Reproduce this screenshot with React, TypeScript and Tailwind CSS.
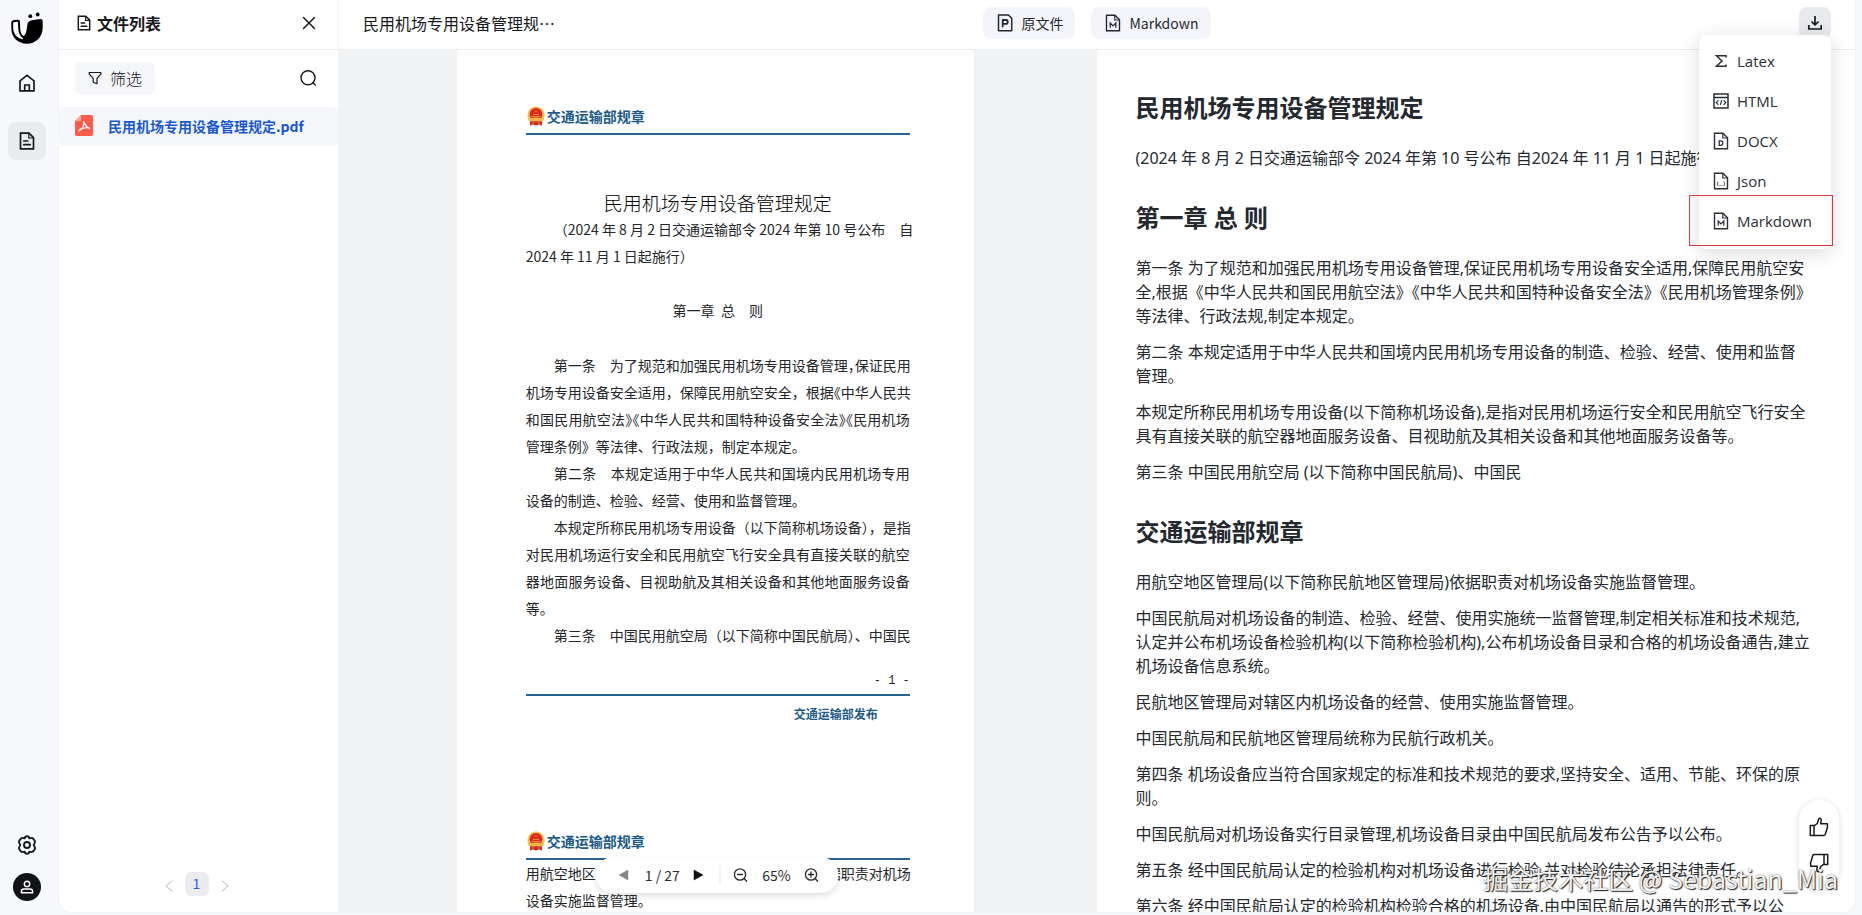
import React from "react";

const stroke = {
  fill: "none",
  stroke: "currentColor",
  strokeLinejoin: "round" as const,
  strokeLinecap: "round" as const,
};

function Logo() {
  return (
    <svg viewBox="0 0 32 32" className="size-8" aria-hidden="true">
      <circle cx="19.3" cy="4.2" r="1.9" fill="#000" />
      <circle cx="26.7" cy="2.5" r="1.9" fill="#000" />
      <path
        d="M16.5 11.5C17.5 9 20 8.3 24 7.8L29.5 7C31 6.900 31.700 7.800 31.700 10V16C31.500 25 25 31.700 16 31.700C7 31.700 0.300 25.500 0.300 16V11C0.300 8.800 1.500 8.300 3.500 8L6.500 7.700C8.300 7.600 8.900 8.500 9 10C9.200 16 9 22.500 12.500 24C15.500 22.500 15.800 17 16.500 11.500Z"
        fill="#000"
      />
      <path
        d="M2.200 11.200C2.200 10.200 3 10 4 9.900L5.800 9.700C6.800 9.700 7 10.200 7 11.500C7.200 17 7.200 22 11 25.400C12 26.200 12.500 26.500 12 27.300C6 26.500 2.200 21.500 2.200 16Z"
        fill="#fff"
      />
    </svg>
  );
}

function HomeIcon() {
  return (
    <svg viewBox="0 0 18 18" className="h-[18px] w-[18px]" strokeWidth="1.7" {...stroke} strokeLinejoin="miter">
      <path d="M2 6.800 9 1.300l7 5.500V16.800H2Z" />
      <path d="M6.700 16.500V11h4.600v5.500" />
    </svg>
  );
}

function DocIcon({ className, mark }: { className: string; mark?: React.ReactNode }) {
  return (
    <svg viewBox="0 0 16 18" className={className} strokeWidth={mark ? "1.4" : "1.7"} {...stroke} strokeLinejoin="miter">
      <path d="M1.500 1.200H10L14.500 5.700V16.800H1.500Z" />
      <path d="M9.800 1.500V6h4.500" strokeWidth="1.200" />
      {mark ?? <path d="M4.800 9h4M4.800 12.700h6.400" />}
    </svg>
  );
}

const markM = <path d="M5.200 13.300V9l2.800 2.900L10.800 9v4.300" strokeWidth="1.200" />;
const markD = <path d="M6.200 8.800h1.500c2.700 0 2.700 4.500 0 4.500H6.200Z" strokeWidth="1.300" />;
const markJson = (
  <path d="M5 10c-1 0-.2 1.800-1 1.800 .8 0 0 1.800 1 1.800M11 10c1 0 .2 1.800 1 1.800-.8 0 0 1.800-1 1.800M7 13.200v.1M9 13.200v.1" strokeWidth="1" />
);

function OriginalIcon() {
  return (
    <svg viewBox="0 0 16 18" className="h-[18px] w-4" strokeWidth="1.500" {...stroke}>
      <path d="M1.500 1h10L14.700 4.200V16.800H1.500Z" />
      <path d="M5.700 12.500V6h3.500c2 0 2 3.800 0 3.800H5.900" strokeWidth="1.800" />
    </svg>
  );
}

function FilterIcon() {
  return (
    <svg viewBox="0 0 14 14" className="size-[14px]" strokeWidth="1.200" {...stroke}>
      <path d="M1.200 1.500h11.600v1.700L9 7.400V12.800L5.200 11.200V7.400L1.200 3.200Z" />
    </svg>
  );
}

function SearchIcon() {
  return (
    <svg viewBox="0 0 18 18" className="h-[18px] w-[18px]" strokeWidth="1.400" {...stroke}>
      <circle cx="9" cy="8.800" r="7" />
      <path d="m14 13.800 2.300 2.300" />
    </svg>
  );
}

function CloseIcon() {
  return (
    <svg viewBox="0 0 14 14" className="size-[14px]" strokeWidth="1.500" {...stroke}>
      <path d="M1.500 1.500 12.500 12.500M12.500 1.500 1.500 12.500" />
    </svg>
  );
}

function PdfIcon() {
  return (
    <svg viewBox="0 0 18 21" className="h-[21px] w-[18px] shrink-0" aria-hidden="true">
      <path d="M6 0H16.200A1.800 1.800 0 0 1 18 1.800V19.200A1.800 1.800 0 0 1 16.200 21H1.800A1.800 1.800 0 0 1 0 19.200V6Z" fill="#ff5a4c" />
      <path d="M6 0V4.500Q6 6 4.500 6H0Z" fill="#ffa79f" />
      <path
        d="M8.600 6.200C9.800 9.500 10.800 11.800 14.600 13.700M3.800 15.900C6.800 14.800 8.900 11.500 8.800 6.400M4.600 14.600C7.500 12.900 10.500 12.400 14.300 13"
        stroke="#fff"
        strokeWidth="1.200"
        fill="none"
        strokeLinecap="round"
      />
    </svg>
  );
}

function GearIcon() {
  return (
    <svg viewBox="0 0 20 20" className="size-5" strokeWidth="1.900" {...stroke}>
      <path d="M7.700 3.300Q7.900 1.200 10 1.200T12.300 3.300Q14.800 2.300 16.300 3.700L18 6.300Q18.200 8 16.600 10Q18.200 12 18 13.700L16.300 16.300Q14.800 17.700 12.300 16.700Q12.100 18.800 10 18.800T7.700 16.700Q5.200 17.700 3.700 16.300L2 13.700Q1.800 12 3.400 10Q1.800 8 2 6.300L3.700 3.700Q5.200 2.300 7.700 3.300Z" />
      <circle cx="10" cy="10" r="3" />
    </svg>
  );
}

function UserIcon() {
  return (
    <svg viewBox="0 0 14 14" className="size-[14px]" strokeWidth="1.400" {...stroke}>
      <circle cx="7" cy="3.900" r="2.700" />
      <path d="M1.400 12.800V11.500C1.400 9.800 2.600 9 4 9h6c1.400 0 2.600.8 2.600 2.500v1.300Z" />
    </svg>
  );
}

function DownloadIcon() {
  return (
    <svg viewBox="0 0 16 16" className="size-4" strokeWidth="1.700" {...stroke} strokeLinecap="butt">
      <path d="M8 1v8.500M4.500 6.500 8 10l3.500-3.500M1.800 10v4h12.400v-4" />
    </svg>
  );
}

function SigmaIcon() {
  return (
    <svg viewBox="0 0 16 16" className="size-4" strokeWidth="1.500" {...stroke} strokeLinejoin="miter" strokeLinecap="butt">
      <path d="M13 4.500V2.700H3.500L9 8l-5.500 5.300H13v-1.800" />
    </svg>
  );
}

function HtmlIcon() {
  return (
    <svg viewBox="0 0 16 16" className="size-4" strokeWidth="1.500" {...stroke} strokeLinejoin="miter">
      <path d="M1 1h14v14H1ZM1 4.400h14" />
      <path d="m5 7.700-1.800 1.900L5 11.500m6-3.800 1.800 1.900L11 11.500M8.700 7.500l-1.300 4" strokeWidth="1.100" />
    </svg>
  );
}

function Emblem() {
  return (
    <svg viewBox="0 0 18 20" className="h-5 w-[18px]" aria-hidden="true">
      <path d="M9 0.500C14 0.500 17.500 4.500 17.500 9.500C17.500 13 16.500 15 15.500 15.500H2.500C1.500 15 0.500 13 0.500 9.500C0.500 4.500 4 0.500 9 0.500Z" fill="#f4c052" />
      <circle cx="9" cy="8.200" r="6.300" fill="#dc2a1e" />
      <path d="M4.200 10.500h9.600M6 8.500h6M9 4v2" stroke="#efa43e" strokeWidth="0.800" />
      <path d="M3 12.500Q9 10.500 15 12.500L14 15.500H4Z" fill="#f3b64a" />
      <path d="M3 15.300H15V19.500L12 18.500L9 19.500L6 18.500L3 19.500Z" fill="#cf2a1c" />
      <path d="M6 15.500v2.500M12 15.500v2.500" stroke="#f1a83f" strokeWidth="0.800" />
    </svg>
  );
}

function ZoomIcon({ plus }: { plus?: boolean }) {
  return (
    <svg viewBox="0 0 14 14" className="size-[14px]" strokeWidth="1.400" {...stroke}>
      <circle cx="6.500" cy="6.500" r="5.600" />
      <path d="M4 6.500h5M10.600 10.600l2.600 2.600" />
      {plus && <path d="M6.500 4v5" />}
    </svg>
  );
}

function ThumbIcon({ down }: { down?: boolean }) {
  return (
    <svg viewBox="0 0 20 20" className={down ? "size-5 rotate-180" : "size-5"} strokeWidth="1.500" {...stroke}>
      <path d="M1.300 8.500H5V18.500H1.300ZM5 8.800 8.300 6.500 9.800 1.800C10.500 .7 12.300 1.500 12.200 3L11.700 6.800H18.300L18.500 10 16.200 17.500Q15.800 18.500 14.800 18.500H5" />
    </svg>
  );
}

const regulationHeader = "交通运输部规章";

const pdfLines: { text: string; indent?: boolean; full?: boolean }[] = [
  { text: "第一条　为了规范和加强民用机场专用设备管理~，保证民用", indent: true, full: true },
  { text: "机场专用设备安全适用，保障民用航空安全，根据~《中华人民共", full: true },
  { text: "和国民用航空法~》《中华人民共和国特种设备安全法~》《民用机场", full: true },
  { text: "管理条例》等法律、行政法规，制定本规定。" },
  { text: "第二条　本规定适用于中华人民共和国境内民用机场专用", indent: true, full: true },
  { text: "设备的制造、检验、经营、使用和监督管理。" },
  { text: "本规定所称民用机场专用设备（以下简称机场设备），是指", indent: true, full: true },
  { text: "对民用机场运行安全和民用航空飞行安全具有直接关联的航空", full: true },
  { text: "器地面服务设备、目视助航及其相关设备和其他地面服务设备", full: true },
  { text: "等。" },
  { text: "第三条　中国民用航空局（以下简称中国民航局）、中国民", indent: true, full: true },
];

// A "~" marks a punctuation character that is set half-width.
function Typeset({ text }: { text: string }) {
  const parts = text.split("~");
  return (
    <>
      {parts.map((part, i) =>
        i === 0 ? (
          part
        ) : (
          <React.Fragment key={i}>
            <span className="[font-feature-settings:'halt']">{part.startsWith("》《") ? "》《" : part[0]}</span>
            {part.slice(part.startsWith("》《") ? 2 : 1)}
          </React.Fragment>
        ),
      )}
    </>
  );
}

function PageHeader() {
  return (
    <div className="flex h-[29px] items-center gap-0.5 border-b-2 border-[#2a6490] pb-2 pl-[1px] text-sm leading-5 font-bold text-[#1b5a8a]">
      <Emblem />
      <span>{regulationHeader}</span>
    </div>
  );
}

const body: { tag: "h2" | "p"; text: string }[] = [
  { tag: "h2", text: "民用机场专用设备管理规定" },
  { tag: "p", text: "(2024 年 8 月 2 日交通运输部令 2024 年第 10 号公布 自2024 年 11 月 1 日起施行)" },
  { tag: "h2", text: "第一章 总 则" },
  { tag: "p", text: "第一条 为了规范和加强民用机场专用设备管理,保证民用机场专用设备安全适用,保障民用航空安全,根据《中华人民共和国民用航空法》《中华人民共和国特种设备安全法》《民用机场管理条例》等法律、行政法规,制定本规定。" },
  { tag: "p", text: "第二条 本规定适用于中华人民共和国境内民用机场专用设备的制造、检验、经营、使用和监督管理。" },
  { tag: "p", text: "本规定所称民用机场专用设备(以下简称机场设备),是指对民用机场运行安全和民用航空飞行安全具有直接关联的航空器地面服务设备、目视助航及其相关设备和其他地面服务设备等。" },
  { tag: "p", text: "第三条 中国民用航空局 (以下简称中国民航局)、中国民" },
  { tag: "h2", text: "交通运输部规章" },
  { tag: "p", text: "用航空地区管理局(以下简称民航地区管理局)依据职责对机场设备实施监督管理。" },
  { tag: "p", text: "中国民航局对机场设备的制造、检验、经营、使用实施统一监督管理,制定相关标准和技术规范,认定并公布机场设备检验机构(以下简称检验机构),公布机场设备目录和合格的机场设备通告,建立机场设备信息系统。" },
  { tag: "p", text: "民航地区管理局对辖区内机场设备的经营、使用实施监督管理。" },
  { tag: "p", text: "中国民航局和民航地区管理局统称为民航行政机关。" },
  { tag: "p", text: "第四条 机场设备应当符合国家规定的标准和技术规范的要求,坚持安全、适用、节能、环保的原则。" },
  { tag: "p", text: "中国民航局对机场设备实行目录管理,机场设备目录由中国民航局发布公告予以公布。" },
  { tag: "p", text: "第五条 经中国民航局认定的检验机构对机场设备进行检验,并对检验结论承担法律责任。" },
  { tag: "p", text: "第六条 经中国民航局认定的检验机构检验合格的机场设备,由中国民航局以通告的形式予以公布。" },
];

const exportItems = [
  { label: "Latex", icon: <SigmaIcon /> },
  { label: "HTML", icon: <HtmlIcon /> },
  { label: "DOCX", icon: <DocIcon className="h-[18px] w-4" mark={markD} /> },
  { label: "Json", icon: <DocIcon className="h-[18px] w-4" mark={markJson} /> },
  { label: "Markdown", icon: <DocIcon className="h-[18px] w-4" mark={markM} /> },
];

export default function App() {
  return (
    <div className="relative flex h-screen overflow-hidden bg-[#f8f9fc] pr-[7px] pb-[3px] font-['Noto_Sans_CJK_SC',sans-serif] text-[#17191c]">
      <nav className="flex w-[59px] shrink-0 flex-col items-center pt-3 pr-[6px] pb-[11px]" aria-label="主导航">
        <Logo />
        <button aria-label="首页" className="mt-5 flex size-[38px] items-center justify-center rounded-lg">
          <HomeIcon />
        </button>
        <button aria-label="文件" className="mt-5 flex size-[38px] items-center justify-center rounded-lg bg-[#ebecf0]">
          <DocIcon className="h-[18px] w-4" />
        </button>
        <button aria-label="设置" className="mt-auto flex size-7 items-center justify-center">
          <GearIcon />
        </button>
        <button aria-label="账户" className="mt-[14px] flex size-7 items-center justify-center rounded-full bg-[#121316] text-white">
          <UserIcon />
        </button>
      </nav>

      <div className="flex min-w-0 flex-1 overflow-hidden rounded-b-xl bg-white shadow-[0_0_2px_rgba(0,0,0,0.1)]">
        <aside className="flex w-[279px] shrink-0 flex-col">
          <header className="flex h-[50px] shrink-0 items-center border-b border-[#e8eaec] pr-[22px] pb-[3px] pl-[18px]">
            <DocIcon className="h-4 w-[14px]" />
            <h1 className="ml-[6px] text-base leading-6 font-bold">文件列表</h1>
            <button aria-label="关闭" className="ml-auto flex size-[14px] items-center justify-center">
              <CloseIcon />
            </button>
          </header>
          <div className="flex items-center justify-between pt-3 pr-[18px] pb-[13px] pl-4">
            <button className="flex h-8 w-20 items-center justify-center gap-2 rounded-md bg-[#f5f6fa] text-base leading-6 font-light">
              <FilterIcon />
              筛选
            </button>
            <button aria-label="搜索" className="flex size-6 items-center justify-center">
              <SearchIcon />
            </button>
          </div>
          <a href="#file" className="flex h-[39px] items-center gap-[15px] rounded-md bg-[#f4f6fa] pb-[2px] pl-4 text-sm leading-5 font-bold text-[#1a58d0]">
            <PdfIcon />
            民用机场专用设备管理规定.pdf
          </a>
          <div className="mt-auto mb-4 flex items-center justify-center gap-[6px] pr-1">
            <button aria-label="上一页" className="flex h-6 w-5 items-center justify-center text-[#b5b7bb]">
              <svg viewBox="0 0 8 12" className="mt-1 h-3 w-2" {...stroke}>
                <path d="M7 1 1 6l6 5" />
              </svg>
            </button>
            <button className="h-6 w-6 rounded-md bg-[#ebecf0] pb-0.5 text-sm leading-5 text-[#2b62d9]">1</button>
            <button aria-label="下一页" className="flex h-6 w-5 items-center justify-center text-[#b5b7bb]">
              <svg viewBox="0 0 8 12" className="mt-1 h-3 w-2" {...stroke}>
                <path d="m1 1 6 5-6 5" />
              </svg>
            </button>
          </div>
        </aside>

        <main className="flex min-w-0 flex-1 flex-col">
          <header className="grid h-[50px] shrink-0 grid-cols-[1fr_auto_1fr] items-center border-b border-l border-[#e8eaec] border-l-[#f3f4f6] pr-6 pb-[3px] pl-6">
            <span className="text-base leading-6">民用机场专用设备管理规…</span>
            <div className="flex gap-4">
              <button className="flex h-8 items-center gap-2 rounded-lg bg-[#f4f5fa] pr-3 pl-[14px] text-sm leading-5 text-[#25282d]">
                <OriginalIcon />
                原文件
              </button>
              <button className="flex h-8 items-center gap-2 rounded-lg bg-[#f4f5fa] pr-3 pl-[14px] text-sm leading-5 text-[#25282d]">
                <DocIcon className="h-[18px] w-4" mark={markM} />
                Markdown
              </button>
            </div>
            <button aria-label="下载" className="flex size-8 items-center justify-center justify-self-end rounded-lg bg-[#e9eaee]">
              <DownloadIcon />
            </button>
          </header>

          <div className="flex min-h-0 flex-1">
            <section className="relative flex w-1/2 justify-center overflow-hidden bg-[#f0f2f4] pr-1">
              <article className="flex w-[517px] shrink-0 flex-col bg-white pt-14 pr-16 pl-[69px] text-[#24262a]">
                <div className="flex flex-col whitespace-nowrap">
                  <PageHeader />
                  <h2 className="mt-[54px] text-center text-[19px] leading-[27px] font-light text-black">民用机场专用设备管理规定</h2>
                  <p className="pl-7 text-sm leading-[27px] [text-align-last:justify]">（2024 年 8 月 2 日交通运输部令 2024 年第 10 号公布　自</p>
                  <p className="text-sm leading-[27px]">2024 年 11 月 1 日起施行）</p>
                  <h3 className="mt-[27px] mb-7 text-center text-sm leading-[27px]">第一章&nbsp; 总　则</h3>
                  <div className="text-sm leading-[27px]">
                    {pdfLines.map((line) => (
                      <div key={line.text} className={`${line.indent ? "pl-7" : ""} ${line.full ? "[text-align-last:justify]" : ""}`}>
                        <Typeset text={line.text} />
                      </div>
                    ))}
                  </div>
                  <p className="mt-[22px] text-right font-['Liberation_Mono',monospace] text-xs leading-5">- 1 -</p>
                  <div className="mt-[3px] border-t-2 border-[#2a6490] pt-2 pr-8 text-right text-xs leading-5 font-bold text-[#1b5a8a]">
                    交通运输部发布
                  </div>
                  <div className="mt-[107px]">
                    <PageHeader />
                  </div>
                  <p className="text-sm leading-[27px]">
                    <Typeset text="用航空地区管理局（以下简称民航地区管理局~）依据职责对机场" />
                    <br />
                    设备实施监督管理。
                  </p>
                </div>
              </article>
              <div className="absolute bottom-[19px] left-1/2 flex h-9 w-[243px] -translate-x-1/2 items-center rounded-full bg-white pr-5 pl-[23px] text-sm leading-5 text-[#2b2d31] shadow-[0_3px_6px_rgba(0,0,0,0.12)]">
                <button aria-label="上一页" className="text-[#85878a]">
                  <svg viewBox="0 0 10 12" className="h-3 w-[10px]" fill="currentColor">
                    <path d="M10 .5v11L0 6Z" />
                  </svg>
                </button>
                <span className="ml-4">1 / 27</span>
                <button aria-label="下一页" className="ml-auto text-[#111]">
                  <svg viewBox="0 0 10 12" className="h-3 w-[10px]" fill="currentColor">
                    <path d="M0 .5v11L10 6Z" />
                  </svg>
                </button>
                <span className="ml-4 h-5 w-px bg-[#e8e9eb]" />
                <button aria-label="缩小" className="ml-[13px]">
                  <ZoomIcon />
                </button>
                <span className="mx-auto">65%</span>
                <button aria-label="放大">
                  <ZoomIcon plus />
                </button>
              </div>
            </section>

            <section className="relative w-1/2 overflow-hidden bg-white pt-10 pr-11 pl-[39px] font-['Noto_Sans','Noto_Sans_CJK_SC',sans-serif] text-[#24292f]">
              {body.map((block) =>
                block.tag === "h2" ? (
                  <h2 key={block.text} className="mt-[30px] mb-5 text-2xl leading-9 font-bold first:mt-0">
                    {block.text}
                  </h2>
                ) : (
                  <p key={block.text} className="mb-3 text-base leading-6">
                    {block.text}
                  </p>
                ),
              )}
              <div className="absolute right-4 bottom-[22px] flex h-[90px] w-10 flex-col items-center justify-center gap-4 rounded-full bg-white text-[#17191c] shadow-[0_1px_6px_rgba(0,0,0,0.14)]">
                <button aria-label="赞">
                  <ThumbIcon />
                </button>
                <button aria-label="踩">
                  <ThumbIcon down />
                </button>
              </div>
            </section>
          </div>
        </main>
      </div>

      <div role="menu" className="absolute top-[35px] right-[31px] flex w-[132px] flex-col rounded-lg bg-white pt-[6px] pb-2 shadow-[0_4px_20px_rgba(0,0,0,0.15)]">
        {exportItems.map((item) => (
          <button
            key={item.label}
            role="menuitem"
            className="flex h-10 items-center gap-2 pl-[14px] font-['Open_Sans','Noto_Sans_CJK_SC',sans-serif] text-[15px] leading-6 text-[#2b2e33]"
          >
            {item.icon}
            {item.label}
          </button>
        ))}
      </div>
      <div className="pointer-events-none absolute top-[195px] right-[29px] h-[51px] w-36 border border-[#d8393f]" />
      <div className="pointer-events-none absolute right-6 bottom-[19px] text-[25px] leading-9 whitespace-nowrap text-[#f2f2f2] [text-shadow:1px_1px_1px_#222,0_0_2px_#666]">
        掘金技术社区 @ Sebastian_Mia
      </div>
    </div>
  );
}
